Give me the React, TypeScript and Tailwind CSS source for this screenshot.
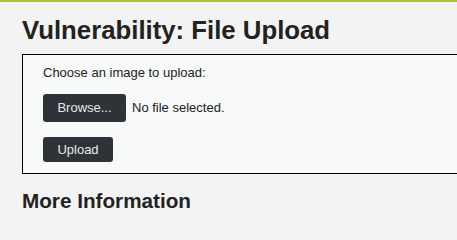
export default function App() {
  return (
    <div className="min-h-screen w-full overflow-hidden bg-[#f3f3f3] font-['Liberation_Sans',Arial,sans-serif] text-[#222]">
      <div className="h-[2px] bg-[#a4c639]" />
      <div className="pl-[22px] pb-[8px]">
        <h1 className="mt-[13px] text-[25.75px] font-bold leading-[30px] text-[#222]">
          Vulnerability: File Upload
        </h1>
        <div className="mt-[9px] h-[120px] w-[460px] border border-black bg-[#f8f9f9] pl-[20px] pt-[10px]">
          <p className="text-[13px] leading-[16px] text-[#222]">Choose an image to upload:</p>
          <div className="mt-[13px] flex items-center gap-[6px]">
            <button className="h-[28px] w-[83px] rounded-[3px] bg-[#2f3337] text-[13px] text-[#e8e8e8]">
              Browse...
            </button>
            <span className="text-[13px] text-[#222]">No file selected.</span>
          </div>
          <button className="mt-[15px] h-[25px] w-[70px] rounded-[3px] bg-[#2f3337] text-[13px] text-[#e8e8e8]">
            Upload
          </button>
        </div>
        <h2 className="mt-[15px] text-[20.7px] font-bold leading-[24px] text-[#222]">More Information</h2>
      </div>
    </div>
  )
}
